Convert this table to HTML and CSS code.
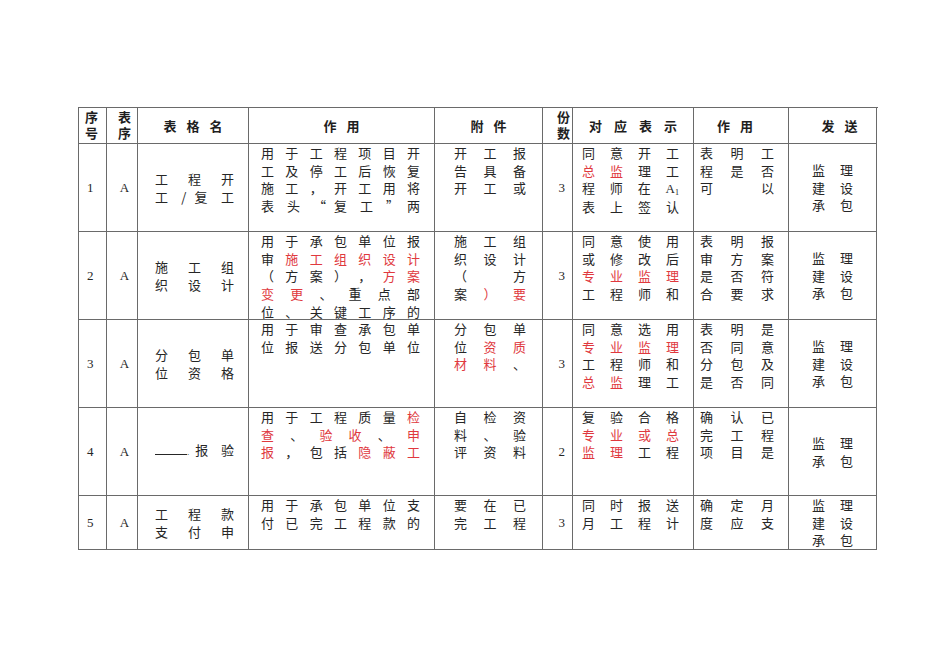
FILE: index.html
```html
<!DOCTYPE html>
<html lang="zh-CN">
<head>
<meta charset="utf-8">
<title>表格</title>
<link rel="stylesheet" href="styles.css">
</head>
<body>
<div class="page">
  <div class="tbl">
    <!-- header -->
    <div class="c h h1"><div class="stk">序号</div></div>
    <div class="c h h2"><div class="stk">表序</div></div>
    <div class="c h hs">表格名</div>
    <div class="c h hs">作用</div>
    <div class="c h hs">附件</div>
    <div class="c h h6"><div class="stk">份数</div></div>
    <div class="c h hs hs7">对应表示</div>
    <div class="c h hs hs8">作用</div>
    <div class="c h hs hs9">发送</div>

    <!-- row 1 -->
    <div class="c n1">1</div>
    <div class="c n2">A</div>
    <div class="c c3"><div class="ln">工 程 开</div><div class="ln">工 / 复 工</div></div>
    <div class="c c4">
      <div class="ln">用 于 工 程 项 目 开</div>
      <div class="ln">工 及 停 工 后 恢 复</div>
      <div class="ln">施 工 ， 开 工 用 将</div>
      <div class="ln">表 头 “ 复 工 ” 两</div>
    </div>
    <div class="c c5">
      <div class="ln">开 工 报</div>
      <div class="ln">告 具 备</div>
      <div class="ln">开 工 或</div>
    </div>
    <div class="c n6">3</div>
    <div class="c c7">
      <div class="ln">同 意 开 工</div>
      <div class="ln"><span class="r">总 监</span> 理 工</div>
      <div class="ln">程 师 在 <span class="lat">A<span class="sub">1</span></span></div>
      <div class="ln">表 上 签 认</div>
    </div>
    <div class="c c8">
      <div class="ln">表 明 工</div>
      <div class="ln">程 是 否</div>
      <div class="ln">可 以</div>
    </div>
    <div class="c c9"><div class="pr">监理</div><div class="pr">建设</div><div class="pr">承包</div></div>

    <!-- row 2 -->
    <div class="c n1">2</div>
    <div class="c n2">A</div>
    <div class="c c3"><div class="ln">施 工 组</div><div class="ln">织 设 计</div></div>
    <div class="c c4">
      <div class="ln">用 于 承 包 单 位 报</div>
      <div class="ln">审 <span class="r">施 工 组 织 设 计</span></div>
      <div class="ln">（ 方 案 ） ， <span class="r">方 案</span></div>
      <div class="ln"><span class="r">变 更</span> 、 重 点 部</div>
      <div class="ln">位 、 关 键 工 序 的</div>
    </div>
    <div class="c c5">
      <div class="ln">施 工 组</div>
      <div class="ln">织 设 计</div>
      <div class="ln">（ 方</div>
      <div class="ln">案 <span class="r">） 要</span></div>
    </div>
    <div class="c n6">3</div>
    <div class="c c7">
      <div class="ln">同 意 使 用</div>
      <div class="ln">或 修 改 后</div>
      <div class="ln"><span class="r">专 业 监 理</span></div>
      <div class="ln">工 程 师 和</div>
    </div>
    <div class="c c8">
      <div class="ln">表 明 报</div>
      <div class="ln">审 方 案</div>
      <div class="ln">是 否 符</div>
      <div class="ln">合 要 求</div>
    </div>
    <div class="c c9"><div class="pr">监理</div><div class="pr">建设</div><div class="pr">承包</div></div>

    <!-- row 3 -->
    <div class="c n1">3</div>
    <div class="c n2">A</div>
    <div class="c c3"><div class="ln">分 包 单</div><div class="ln">位 资 格</div></div>
    <div class="c c4">
      <div class="ln">用 于 审 查 承 包 单</div>
      <div class="ln">位 报 送 分 包 单 位</div>
    </div>
    <div class="c c5">
      <div class="ln">分 包 单</div>
      <div class="ln">位 <span class="r">资 质</span></div>
      <div class="ln"><span class="r">材 料</span> 、</div>
    </div>
    <div class="c n6">3</div>
    <div class="c c7">
      <div class="ln">同 意 选 用</div>
      <div class="ln"><span class="r">专 业 监 理</span></div>
      <div class="ln">工 程 师 和</div>
      <div class="ln"><span class="r">总 监</span> 理 工</div>
    </div>
    <div class="c c8">
      <div class="ln">表 明 是</div>
      <div class="ln">否 同 意</div>
      <div class="ln">分 包 及</div>
      <div class="ln">是 否 同</div>
    </div>
    <div class="c c9"><div class="pr">监理</div><div class="pr">建设</div><div class="pr">承包</div></div>

    <!-- row 4 -->
    <div class="c n1">4</div>
    <div class="c n2">A</div>
    <div class="c c3"><div class="ln"><span class="blank"></span><span class="dot">.</span>报 验</div></div>
    <div class="c c4">
      <div class="ln">用 于 工 程 质 量 <span class="r">检</span></div>
      <div class="ln"><span class="r">查</span> 、 <span class="r">验 收</span> 、 <span class="r">申</span></div>
      <div class="ln"><span class="r">报</span> ， 包 括 <span class="r">隐 蔽 工</span></div>
    </div>
    <div class="c c5">
      <div class="ln">自 检 资</div>
      <div class="ln">料 、 验</div>
      <div class="ln">评 资 料</div>
    </div>
    <div class="c n6">2</div>
    <div class="c c7">
      <div class="ln">复 验 合 格</div>
      <div class="ln"><span class="r">专 业 或 总</span></div>
      <div class="ln"><span class="r">监 理</span> 工 程</div>
    </div>
    <div class="c c8">
      <div class="ln">确 认 已</div>
      <div class="ln">完 工 程</div>
      <div class="ln">项 目 是</div>
    </div>
    <div class="c c9"><div class="pr">监理</div><div class="pr">承包</div></div>

    <!-- row 5 -->
    <div class="c n1">5</div>
    <div class="c n2">A</div>
    <div class="c c3"><div class="ln">工 程 款</div><div class="ln">支 付 申</div></div>
    <div class="c c4">
      <div class="ln">用 于 承 包 单 位 支</div>
      <div class="ln">付 已 完 工 程 款 的</div>
    </div>
    <div class="c c5">
      <div class="ln">要 在 已</div>
      <div class="ln">完 工 程</div>
    </div>
    <div class="c n6">3</div>
    <div class="c c7">
      <div class="ln">同 时 报 送</div>
      <div class="ln">月 工 程 计</div>
    </div>
    <div class="c c8">
      <div class="ln">确 定 月</div>
      <div class="ln">度 应 支</div>
    </div>
    <div class="c c9"><div class="pr">监理</div><div class="pr">建设</div><div class="pr">承包</div></div>
  </div>
</div>
</body>
</html>
```

FILE: styles.css
```css
html, body {
  margin: 0;
  padding: 0;
  background: #ffffff;
}

body {
  font-family: "Noto Sans CJK SC", "Noto Sans", sans-serif;
  font-size: 13px;
  color: #262626;
}

.page {
  padding: 107px 0 0 78px;
}

.tbl {
  display: grid;
  grid-template-columns: 28px 31px 111px 186px 108px 30px 121px 95px 88px;
  grid-template-rows: 36px 88px 88px 88px 88px 54px;
  width: 799px;
  border-left: 1px solid #6a6a6a;
  border-top: 1px solid #6a6a6a;
}

.c {
  border-right: 1px solid #6a6a6a;
  border-bottom: 1px solid #6a6a6a;
  overflow: hidden;
  min-width: 0;
}

/* header */
.h {
  font-weight: bold;
  display: flex;
  flex-direction: column;
  justify-content: center;
  line-height: 16px;
  color: #1e1e1e;
}

.stk {
  writing-mode: vertical-rl;
  text-orientation: upright;
  letter-spacing: 3px;
  line-height: 14px;
  margin-top: 2px;
}

.h1 { align-items: flex-start; padding-left: 5px; }
.h2 { align-items: center; padding-left: 4px; }
.h6 { align-items: flex-end; padding-right: 2px; }

.hs {
  align-items: center;
  letter-spacing: 10px;
  padding-left: 10px;
}

.hs7 { letter-spacing: 12px; padding-left: 12px; }
.hs8 { padding-right: 12px; }
.hs9 { padding-left: 24px; }

/* number columns */
.n1, .n2, .n6 {
  display: flex;
  align-items: center;
  font-family: "Liberation Serif", serif;
  font-size: 13px;
}

.n1 { padding-left: 8px; }
.n2 { justify-content: center; padding-left: 5px; }
.n6 { justify-content: flex-end; padding-right: 7px; }

/* justified text lines */
.ln {
  line-height: 17.7px;
  text-align: justify;
  text-align-last: justify;
}

.c3 {
  display: flex;
  flex-direction: column;
  justify-content: center;
  padding: 0 14px 0 17px;
}

.c4 { padding: 0 14px 0 12px; }
.c5 { padding: 0 16px 0 19px; }
.c7 { padding: 0 14px 0 9px; }
.c8 { padding: 0 14px 0 6px; }

.c9 {
  display: flex;
  flex-direction: column;
  justify-content: center;
  align-items: center;
}

.pr {
  line-height: 17.5px;
  letter-spacing: 15px;
  padding-left: 15px;
}

.r {
  color: #e0393e;
}

.lat {
  font-family: "Liberation Serif", serif;
  font-size: 13px;
}

.sub {
  font-size: 8px;
  line-height: 0;
  vertical-align: -2px;
}

.blank {
  display: inline-block;
  width: 32px;
  height: 10px;
  border-bottom: 1px solid #262626;
  vertical-align: baseline;
}

.dot {
  font-family: "Liberation Serif", serif;
  font-size: 9px;
  margin-right: 1px;
}
```
